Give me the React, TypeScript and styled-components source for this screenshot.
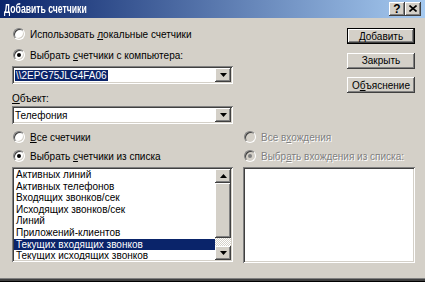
import React from 'react';
import styled, { createGlobalStyle, css } from 'styled-components';

const face = '#d4d0c8';
const shadow = '#808080';
const dark = '#404040';
const navy = '#0a246a';

const GlobalStyle = createGlobalStyle`
  html, body {
    margin: 0;
    padding: 0;
    background: ${face};
  }
  body {
    font-family: "Liberation Sans", Arial, sans-serif;
    font-size: 10px;
    color: #000;
  }
  * { box-sizing: border-box; }
`;

const raised = css`
  background: ${face};
  box-shadow: inset -1px -1px ${dark}, inset 1px 1px #fff, inset -2px -2px ${shadow}, inset 2px 2px ${face};
`;

const sunken = css`
  box-shadow: inset 1px 1px ${shadow}, inset -1px -1px #fff, inset 2px 2px ${dark}, inset -2px -2px ${face};
`;

const Window = styled.div`
  width: 425px;
  height: 282px;
  display: flex;
  flex-direction: column;
  background: ${face};
  box-shadow: inset 0 -1px #000, inset 0 -3px ${dark}, inset 0 -4px ${shadow};
`;

const TitleBar = styled.div`
  height: 18px;
  flex: none;
  display: flex;
  align-items: center;
  justify-content: space-between;
  padding: 0 4px;
  background: linear-gradient(to right, ${navy}, #a6caf0);
`;

// the caption font in the screenshot is tall but narrow
const TitleText = styled.span`
  color: #fff;
  font-weight: bold;
  font-size: 12px;
  white-space: nowrap;
  transform: scaleX(0.72);
  transform-origin: left center;
`;

const CaptionButtons = styled.div`
  display: flex;
`;

const CaptionButton = styled.div`
  ${raised};
  width: 16px;
  height: 14px;
  display: flex;
  align-items: center;
  justify-content: center;
  font-weight: bold;
  font-size: 12px;
  padding-bottom: 1px;
`;

const Body = styled.div`
  padding: 10px 10px 0 12px;
  display: flex;
  flex-direction: column;
`;

const Section = styled.div`
  display: grid;
  grid-template-columns: 221px 172px;
  column-gap: 10px;
`;

const Column = styled.div`
  display: flex;
  flex-direction: column;
`;

const ButtonColumn = styled.div`
  justify-self: end;
  width: 68px;
  display: flex;
  flex-direction: column;
  gap: 8.5px;
`;

const PushButton = styled.div<{ $default?: boolean }>`
  height: 16px;
  display: flex;
  align-items: center;
  justify-content: center;
  background: ${face};
  box-shadow: ${({ $default }) =>
    $default
      ? `inset 0 0 0 1px #000, inset -2px -2px ${dark}, inset 2px 2px #fff, inset -3px -3px ${shadow}`
      : `inset -1px -1px ${dark}, inset 1px 1px #fff, inset -2px -2px ${shadow}`};
`;

const Row = styled.div<{ $top?: number; $disabled?: boolean }>`
  height: 12px;
  margin-top: ${({ $top }) => $top ?? 0}px;
  display: flex;
  align-items: center;
  gap: 5px;
  white-space: nowrap;
  color: ${({ $disabled }) => ($disabled ? shadow : '#000')};
  text-shadow: ${({ $disabled }) => ($disabled ? '1px 1px 0 #fff' : 'none')};
`;

const Radio = styled.span<{ $checked?: boolean; $disabled?: boolean }>`
  position: relative;
  flex: none;
  width: 12px;
  height: 12px;
  margin-left: 1px;
  border-radius: 50%;
  background: ${({ $disabled }) => ($disabled ? face : '#fff')};
  border: 1px solid;
  border-color: ${shadow} #fff #fff ${shadow};
  box-shadow: inset 1px 1px ${dark}, inset -1px -1px ${face};

  &::after {
    content: '';
    display: ${({ $checked }) => ($checked ? 'block' : 'none')};
    position: absolute;
    left: 3px;
    top: 3px;
    width: 4px;
    height: 4px;
    border-radius: 50%;
    background: ${({ $disabled }) => ($disabled ? shadow : '#000')};
  }
`;

const Key = styled.u`
  text-decoration: underline;
`;

const Combo = styled.div<{ $top?: number }>`
  ${sunken};
  margin-top: ${({ $top }) => $top ?? 0}px;
  height: 18px;
  background: #fff;
  display: flex;
  align-items: center;
  padding: 2px;
`;

const ComboValue = styled.div`
  flex: 1;
  padding-left: 1px;
  white-space: nowrap;
  overflow: hidden;
`;

const Selected = styled.span`
  background: ${navy};
  color: #fff;
  padding: 0 1px;
`;

const ArrowButton = styled.div`
  ${raised};
  flex: none;
  width: 16px;
  height: 14px;
  display: flex;
  align-items: center;
  justify-content: center;
`;

const ListBox = styled.div<{ $height: number }>`
  ${sunken};
  margin-top: 5px;
  height: ${({ $height }) => $height}px;
  background: #fff;
  display: flex;
  padding: 2px;
`;

const Items = styled.div`
  flex: 1;
  overflow: hidden;
`;

const Item = styled.div<{ $selected?: boolean }>`
  height: 11.6px;
  line-height: 11.6px;
  padding-left: 2px;
  white-space: nowrap;
  background: ${({ $selected }) => ($selected ? navy : 'transparent')};
  color: ${({ $selected }) => ($selected ? '#fff' : '#000')};
`;

const ScrollBar = styled.div`
  width: 16px;
  flex: none;
  display: flex;
  flex-direction: column;
`;

const Thumb = styled.div`
  ${raised};
  height: 55px;
  flex: none;
`;

const Track = styled.div`
  flex: 1;
  background: repeating-conic-gradient(#fff 0% 25%, ${face} 0% 50%) 0 0 / 2px 2px;
`;

const Arrow = ({ up }: { up?: boolean }) => (
  <svg width="7" height="4" viewBox="0 0 7 4">
    <polygon points={up ? '3.5,0 7,4 0,4' : '0,0 7,0 3.5,4'} fill="#000" />
  </svg>
);

const counters = [
  'Активных линий',
  'Активных телефонов',
  'Входящих звонков/сек',
  'Исходящих звонков/сек',
  'Линий',
  'Приложений-клиентов',
  'Текущих входящих звонков',
  'Текущих исходящих звонков',
];

export default function App() {
  return (
    <>
      <GlobalStyle />
      <Window>
        <TitleBar>
          <TitleText>Добавить счетчики</TitleText>
          <CaptionButtons>
            <CaptionButton>?</CaptionButton>
            <CaptionButton>
              <svg width="8" height="7" viewBox="0 0 8 7">
                <path d="M0.5 0.5 L7.5 6.5 M7.5 0.5 L0.5 6.5" stroke="#000" strokeWidth="1.6" />
              </svg>
            </CaptionButton>
          </CaptionButtons>
        </TitleBar>

        <Body>
          <Section>
            <Column>
              <Row>
                <Radio />
                <span>Использовать <Key>л</Key>окальные счетчики</span>
              </Row>
              <Row $top={9}>
                <Radio $checked />
                <span>Выбрать <Key>с</Key>четчики с компьютера:</span>
              </Row>
              <Combo $top={5}>
                <ComboValue>
                  <Selected>\\2EPG75JLG4FA06</Selected>
                </ComboValue>
                <ArrowButton>
                  <Arrow />
                </ArrowButton>
              </Combo>
              <Row $top={8}>
                <span><Key>О</Key>бъект:</span>
              </Row>
              <Combo $top={2}>
                <ComboValue>Телефония</ComboValue>
                <ArrowButton>
                  <Arrow />
                </ArrowButton>
              </Combo>
            </Column>

            <ButtonColumn>
              <PushButton $default>Добавить</PushButton>
              <PushButton>Закрыть</PushButton>
              <PushButton>О<Key>б</Key>ъяснение</PushButton>
            </ButtonColumn>
          </Section>

          <Section>
            <Column>
              <Row $top={7}>
                <Radio />
                <span><Key>В</Key>се счетчики</span>
              </Row>
              <Row $top={7}>
                <Radio $checked />
                <span>Выбрать <Key>с</Key>четчики из списка</span>
              </Row>
              <ListBox $height={95}>
                <Items>
                  {counters.map((name, i) => (
                    <Item key={name} $selected={i === 6}>
                      {name}
                    </Item>
                  ))}
                </Items>
                <ScrollBar>
                  <ArrowButton>
                    <Arrow up />
                  </ArrowButton>
                  <Thumb />
                  <Track />
                  <ArrowButton>
                    <Arrow />
                  </ArrowButton>
                </ScrollBar>
              </ListBox>
            </Column>

            <Column>
              <Row $top={7} $disabled>
                <Radio $disabled />
                <span>Все в<Key>х</Key>ождения</span>
              </Row>
              <Row $top={7} $disabled>
                <Radio $checked $disabled />
                <span>Выбр<Key>а</Key>ть вхождения из списка:</span>
              </Row>
              <ListBox $height={96} />
            </Column>
          </Section>
        </Body>
      </Window>
    </>
  );
}
